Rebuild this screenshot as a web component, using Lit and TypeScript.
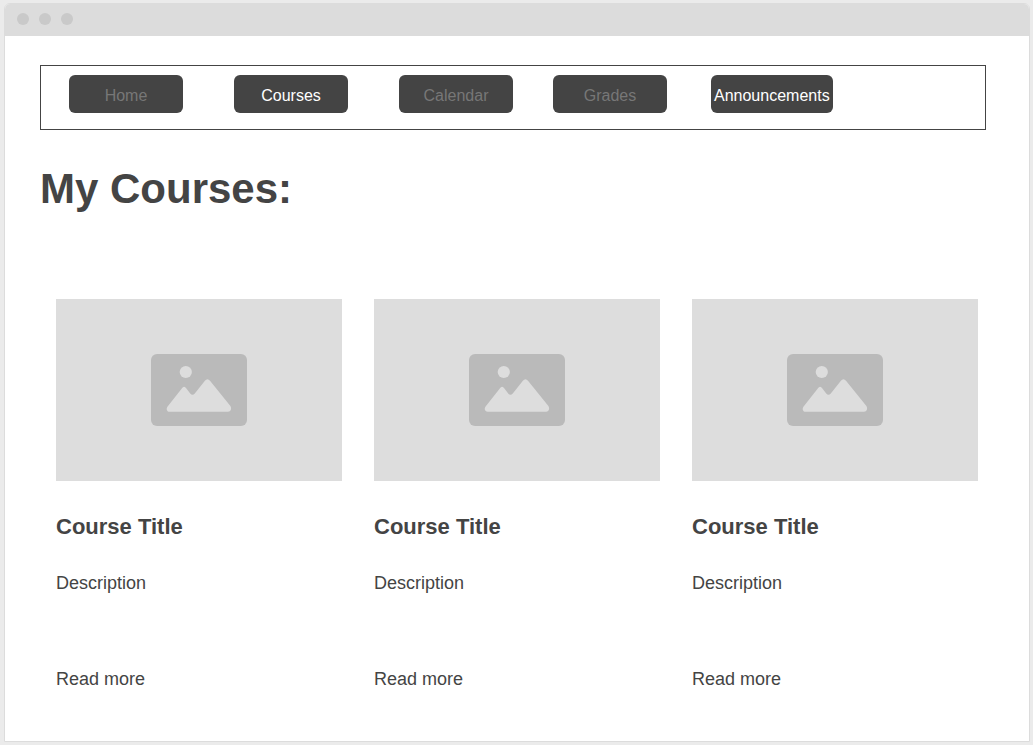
import { LitElement, html, css } from "lit";
import { customElement, property } from "lit/decorators.js";

interface NavItem {
  label: string;
  enabled: boolean;
  space: string;
}

const NAV_ITEMS: NavItem[] = [
  { label: "Home", enabled: false, space: "first" },
  { label: "Courses", enabled: true, space: "wide" },
  { label: "Calendar", enabled: false, space: "wide" },
  { label: "Grades", enabled: false, space: "narrow" },
  { label: "Announcements", enabled: true, space: "medium" },
];

const COURSES = [1, 2, 3].map((id) => ({
  id,
  title: "Course Title",
  description: "Description",
}));

@customElement("nav-bar")
export class NavBar extends LitElement {
  static styles = css`
    :host {
      display: block;
    }
    .bar {
      display: flex;
      align-items: flex-start;
      padding: 9px 28px 16px;
      border: 1px solid #444;
    }
    .item {
      min-width: 114px;
      height: 38px;
      padding: 4px 3px 0;
      border: 0;
      border-radius: 6px;
      background: #444;
      color: #fff;
      font: 16px/20px "Liberation Sans", Arial, sans-serif;
      cursor: pointer;
    }
    .item:disabled {
      color: #777;
      cursor: default;
    }
    .wide {
      margin-left: 51px;
    }
    .narrow {
      margin-left: 40px;
    }
    .medium {
      margin-left: 44px;
    }
  `;

  render() {
    return html`
      <nav class="bar" aria-label="Main">
        ${NAV_ITEMS.map(
          (item) => html`<button
            type="button"
            class="item ${item.space}"
            ?disabled=${!item.enabled}
          >${item.label}</button>`
        )}
      </nav>
    `;
  }
}

@customElement("course-card")
export class CourseCard extends LitElement {
  @property() heading = "";
  @property() description = "";

  static styles = css`
    :host {
      display: block;
      min-width: 0;
    }
    .picture {
      display: flex;
      align-items: center;
      justify-content: center;
      height: 182px;
      background: #ddd;
    }
    .glyph {
      display: block;
      width: 96px;
      height: 72px;
    }
    .title {
      margin: 32px 0 0;
      font-size: 22px;
      line-height: 28px;
      font-weight: 700;
    }
    .text {
      margin: 30px 0 0;
      font-size: 18px;
      line-height: 24px;
    }
    .more {
      display: inline-block;
      margin-top: 72px;
      color: inherit;
      text-decoration: none;
      font-size: 18px;
      line-height: 24px;
    }
  `;

  render() {
    return html`
      <article>
        <div class="picture">
          <svg class="glyph" viewBox="0 0 96 72" aria-hidden="true">
            <rect width="96" height="72" rx="6" fill="#bababa" />
            <circle cx="34.8" cy="18" r="6.1" fill="#ddd" />
            <path
              fill="#ddd"
              d="M16.6 52.4 30.8 34.4Q33.1 31.2 35.4 34.4L39.2 39.4Q41.3 42.2 43.8 39.6L53.9 26.8Q56.4 23.6 59 26.8L79.2 51.8C81.1 54.4 79.9 57.8 77 57.8H18.8C15.9 57.8 14.8 54.8 16.6 52.4Z"
            />
          </svg>
        </div>
        <h2 class="title">${this.heading}</h2>
        <p class="text">${this.description}</p>
        <a class="more" href="#">Read more</a>
      </article>
    `;
  }
}

@customElement("app-root")
export class AppRoot extends LitElement {
  static styles = css`
    :host {
      display: block;
      box-sizing: border-box;
      min-height: 100vh;
      padding: 3px 3px 3px 4px;
      background: #ebebeb;
      color: #444;
      font-family: "Liberation Sans", Arial, sans-serif;
    }
    .window {
      box-sizing: border-box;
      min-height: calc(100vh - 6px);
      border: 1px solid #dcdcdc;
      border-radius: 6px 6px 0 0;
      background: #fff;
    }
    .titlebar {
      display: flex;
      align-items: center;
      gap: 10px;
      box-sizing: border-box;
      height: 32px;
      padding: 0 12px 2px;
      border-radius: 5px 5px 0 0;
      background: #dcdcdc;
    }
    .dot {
      width: 12px;
      height: 12px;
      border-radius: 50%;
      background: #c9c9c9;
    }
    .page {
      padding: 29px 43px 48px 35px;
    }
    .heading {
      margin: 34px 0 0;
      font-size: 42px;
      line-height: 50px;
      font-weight: 700;
    }
    .courses {
      display: grid;
      grid-template-columns: repeat(3, minmax(0, 1fr));
      gap: 32px;
      margin: 85px 8px 0 16px;
    }
  `;

  render() {
    return html`
      <div class="window">
        <div class="titlebar">
          <span class="dot"></span>
          <span class="dot"></span>
          <span class="dot"></span>
        </div>
        <main class="page">
          <nav-bar></nav-bar>
          <h1 class="heading">My Courses:</h1>
          <section class="courses" aria-label="My Courses">
            ${COURSES.map(
              (course) => html`<course-card
                .heading=${course.title}
                .description=${course.description}
              ></course-card>`
            )}
          </section>
        </main>
      </div>
    `;
  }
}
